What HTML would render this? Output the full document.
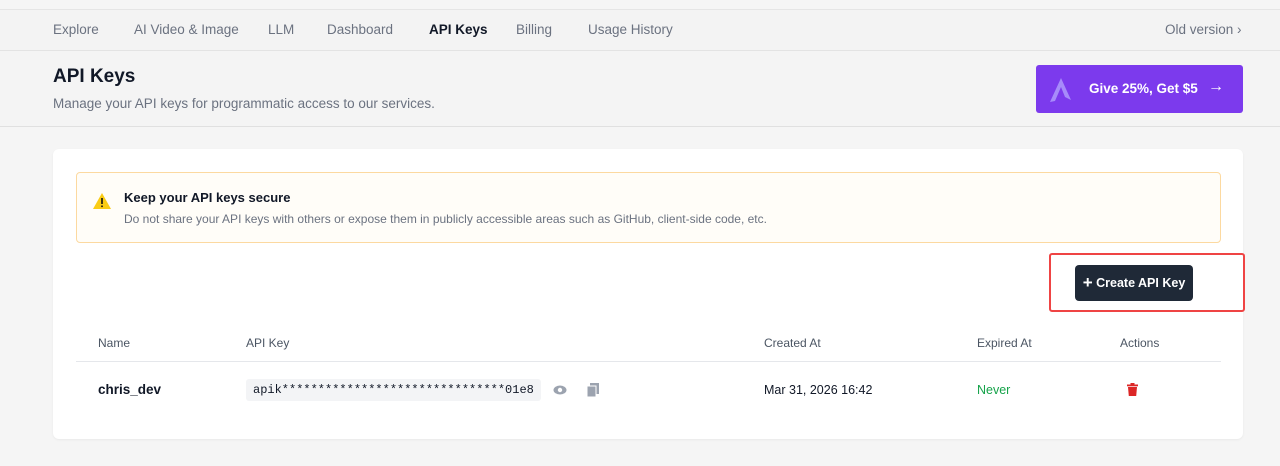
<!DOCTYPE html>
<html><head><meta charset="utf-8"><style>
*{box-sizing:border-box;margin:0;padding:0}
body{width:1280px;height:466px;background:#f5f5f5;font-family:"Liberation Sans",sans-serif;position:relative;overflow:hidden;color:#111827}
.abs{position:absolute;white-space:nowrap}
.nav{position:absolute;left:0;top:9px;width:1280px;height:42px;border-top:1px solid #e5e5e5;border-bottom:1px solid #e3e3e3;background:#f3f3f3}
.nav span{position:absolute;top:12px;font-size:13.5px;color:#6b7280}
.hdr{position:absolute;left:0;top:51px;width:1280px;height:76px;border-bottom:1px solid #e0e0e0;background:#f4f4f4}
.card{position:absolute;left:53px;top:149px;width:1190px;height:290px;background:#fff;border-radius:6px;box-shadow:0 1px 2px rgba(0,0,0,.05)}
</style></head><body>
<div class="nav">
<span style="left:53px">Explore</span>
<span style="left:134px">AI Video &amp; Image</span>
<span style="left:268px">LLM</span>
<span style="left:327px">Dashboard</span>
<span style="left:429px;color:#111827;font-weight:bold">API Keys</span>
<span style="left:516px">Billing</span>
<span style="left:588px">Usage History</span>
<span style="left:1165px">Old version ›</span>
</div>
<div class="hdr">
<div class="abs" style="left:53px;top:15px;font-size:19px;font-weight:bold">API Keys</div>
<div class="abs" style="left:53px;top:45px;font-size:13.5px;color:#6b7280">Manage your API keys for programmatic access to our services.</div>
<div class="abs" style="left:1036px;top:14px;width:207px;height:48px;background:#7c3aed;border-radius:3px;color:#fff">
<svg style="position:absolute;left:10px;top:10px" width="30" height="30" viewBox="0 0 30 30"><path d="M15 3 L25 25 L19 22 L15 12 L9 26 L4 27 Z" fill="#a78bfa"/></svg>
<span style="position:absolute;left:53px;top:16px;font-size:13.5px;font-weight:bold">Give 25%, Get $5</span>
<span style="position:absolute;left:172px;top:13px;font-size:16px">→</span>
</div>
</div>
<div class="card">
<div style="position:absolute;left:23px;top:23px;width:1145px;height:71px;border:1px solid #fcd9a0;border-radius:4px;background:#fffdf8">
<svg style="position:absolute;left:15px;top:19px" width="20" height="18" viewBox="0 0 20 18"><path d="M10 1 L19 17 L1 17 Z" fill="#facc15"/><rect x="9.2" y="6" width="1.6" height="6" fill="#111"/><rect x="9.2" y="13.5" width="1.6" height="1.6" fill="#111"/></svg>
<div class="abs" style="left:47px;top:17px;font-size:13px;font-weight:bold">Keep your API keys secure</div>
<div class="abs" style="left:47px;top:39px;font-size:12px;color:#6b7280">Do not share your API keys with others or expose them in publicly accessible areas such as GitHub, client-side code, etc.</div>
</div>
<div style="position:absolute;left:996px;top:104px;width:196px;height:59px;border:2px solid #ef4444;border-radius:3px"></div>
<div class="abs" style="left:1022px;top:116px;width:118px;height:36px;background:#1f2937;border-radius:4px;color:#fff;font-size:12.5px;font-weight:bold;line-height:36px;text-align:center"><span style="font-size:17px;vertical-align:-1px">+</span>&nbsp;Create API Key</div>
<div style="position:absolute;left:23px;top:179px;width:1145px;height:34px;border-bottom:1px solid #e5e7eb;font-size:12px;color:#4b5563">
<span class="abs" style="left:22px;top:8px">Name</span>
<span class="abs" style="left:170px;top:8px">API Key</span>
<span class="abs" style="left:688px;top:8px">Created At</span>
<span class="abs" style="left:901px;top:8px">Expired At</span>
<span class="abs" style="left:1044px;top:8px">Actions</span>
</div>
<div class="abs" style="left:45px;top:233px;font-size:13.5px;font-weight:bold">chris_dev</div>
<div class="abs" style="left:193px;top:230px;height:22px;padding:0 7px;background:#f3f4f6;border-radius:3px;font-family:'Liberation Mono',monospace;font-size:12px;line-height:22px">apik*******************************01e8</div>
<svg style="position:absolute;left:500px;top:236px" width="14" height="10" viewBox="0 0 14 10"><ellipse cx="7" cy="5" rx="6.5" ry="4.5" fill="#9ca3af"/><circle cx="7" cy="5" r="2.2" fill="#fff"/></svg>
<svg style="position:absolute;left:534px;top:234px" width="12" height="14" viewBox="0 0 12 14"><rect x="3" y="0" width="9" height="11" fill="#9ca3af"/><rect x="0" y="3" width="9" height="11" fill="#9ca3af" stroke="#fff"/></svg>
<div class="abs" style="left:711px;top:234px;font-size:12.5px">Mar 31, 2026 16:42</div>
<div class="abs" style="left:924px;top:234px;font-size:12.5px;color:#16a34a">Never</div>
<svg style="position:absolute;left:1074px;top:234px" width="11" height="13" viewBox="0 0 11 13"><rect x="0" y="1.5" width="11" height="1.8" fill="#dc2626"/><rect x="3.5" y="0" width="4" height="2" fill="#dc2626"/><path d="M1 4 H10 L9.2 13 H1.8 Z" fill="#dc2626"/></svg>
</div>
</body></html>
